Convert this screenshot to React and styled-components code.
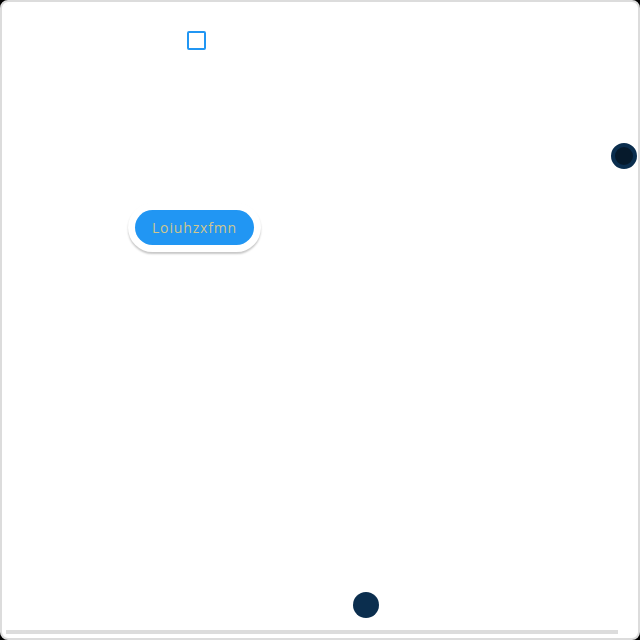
import React from 'react';
import styled, { createGlobalStyle } from 'styled-components';

const Global = createGlobalStyle`
  html, body {
    margin: 0;
    padding: 0;
    background: #000000;
  }
  body {
    font-family: "Open Sans", "Noto Sans", sans-serif;
  }
`;

const Frame = styled.div`
  position: relative;
  box-sizing: border-box;
  width: 640px;
  height: 640px;
  border: 2px solid #dcdcdc;
  border-radius: 8px;
  background: #ffffff;
  overflow: hidden;
`;

const Checkbox = styled.div`
  position: absolute;
  left: 185px;
  top: 29px;
  box-sizing: border-box;
  width: 19px;
  height: 19px;
  border: 2px solid #2196f3;
  border-radius: 2px;
`;

const ButtonShell = styled.div`
  position: absolute;
  left: 126px;
  top: 201px;
  padding: 7px;
  border-radius: 30px;
  background: #ffffff;
  box-shadow: 0 2px 2px rgba(0, 0, 0, 0.22);
`;

const PillButton = styled.button`
  display: flex;
  align-items: center;
  justify-content: center;
  width: 119px;
  height: 35px;
  padding: 0;
  border: none;
  border-radius: 18px;
  background: #2196f3;
  color: #cfc68e;
  font-family: "Open Sans", "Noto Sans", sans-serif;
  font-size: 14px;
  letter-spacing: 0.85px;
`;

const Knob = styled.div`
  position: absolute;
  left: ${p => p.x}px;
  top: ${p => p.y}px;
  box-sizing: border-box;
  width: 26px;
  height: 26px;
  border-radius: 50%;
  background: ${p => (p.inner ? '#061a2c' : '#0b2e4e')};
  border: ${p => (p.inner ? '4px solid #0b2e4e' : 'none')};
`;

const Track = styled.div`
  position: absolute;
  left: 4px;
  right: 20px;
  bottom: 4px;
  height: 4px;
  background: #dcdcdc;
`;

export default function App() {
  return (
    <>
      <Global />
      <Frame>
        <Checkbox />
        <ButtonShell>
          <PillButton>Loiuhzxfmn</PillButton>
        </ButtonShell>
        <Knob x={609} y={141} inner />
        <Knob x={351} y={590} />
        <Track />
      </Frame>
    </>
  );
}
